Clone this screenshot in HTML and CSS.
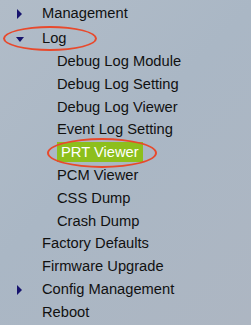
FILE: index.html
```html
<!DOCTYPE html>
<html>
	<head>
		<meta charset="UTF-8">
		<title>Administration</title>
		<link rel="stylesheet" href="styles.css">
	</head>
	<body>
		<ul class="menu">
			<li class="folder first"><span class="arrow right"></span>Management</li>
			<li class="folder open circled-log"><span class="arrow down"></span>Log</li>
			<li>
				<ul class="sub">
					<li>Debug Log Module</li>
					<li>Debug Log Setting</li>
					<li>Debug Log Viewer</li>
					<li>Event Log Setting</li>
					<li class="current"><span class="hl">PRT Viewer</span></li>
					<li>PCM Viewer</li>
					<li>CSS Dump</li>
					<li>Crash Dump</li>
				</ul>
			</li>
			<li>Factory Defaults</li>
			<li>Firmware Upgrade</li>
			<li class="folder"><span class="arrow right"></span>Config Management</li>
			<li>Reboot</li>
		</ul>
	</body>
</html>
```

FILE: styles.css
```css
html, body {
	margin: 0;
	padding: 0;
	height: 100%;
}

body {
	background: linear-gradient(135deg, #b1bcc8 0%, #aab7c5 45%, #adb6c2 100%);
	font-family: "Liberation Sans", Arial, sans-serif;
	font-size: 14.7px;
	color: #111;
	overflow: hidden;
}

.menu {
	list-style: none;
	margin: 0;
	padding: 2px 0 0 42px;
}

.menu li {
	height: 22.8px;
	line-height: 22.8px;
	position: relative;
	white-space: nowrap;
}

.menu li.first {
	margin-bottom: 2.5px;
}

.menu li:has(.sub) {
	height: auto;
}

.sub {
	list-style: none;
	margin: 0;
	padding: 0 0 0 15px;
}

.arrow {
	position: absolute;
	width: 0;
	height: 0;
}

.arrow.right {
	left: -25px;
	top: 6.5px;
	border-top: 5px solid transparent;
	border-bottom: 5px solid transparent;
	border-left: 5px solid #17146e;
}

.arrow.down {
	left: -26px;
	top: 10px;
	border-left: 4.5px solid transparent;
	border-right: 4.5px solid transparent;
	border-top: 5px solid #17146e;
}

.circled-log::after {
	content: "";
	position: absolute;
	left: -39px;
	top: -1px;
	width: 90px;
	height: 21px;
	border: 2.5px solid #e8492c;
	border-radius: 50%;
}

.current .hl {
	display: inline-block;
	background: #8dbf1c;
	color: #fff;
	padding: 0 4px;
	height: 20px;
	line-height: 20px;
	margin-top: 1px;
}

.current::after {
	content: "";
	position: absolute;
	left: -10px;
	top: -3px;
	width: 106px;
	height: 26px;
	border: 2.5px solid #e8492c;
	border-radius: 50%;
}
```
